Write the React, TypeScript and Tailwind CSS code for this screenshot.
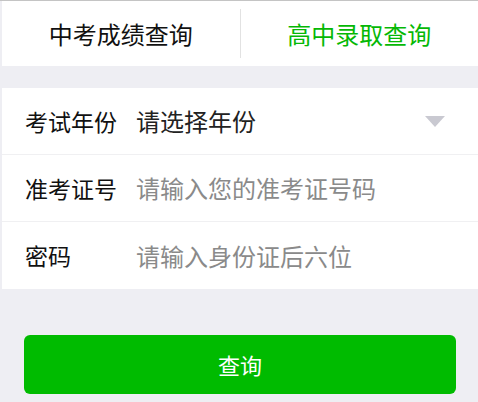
const font = "font-['Microsoft_YaHei','Noto_Sans_CJK_SC',sans-serif]";

function Row({ label, children, last }: { label: string; children: React.ReactNode; last?: boolean }) {
  return (
    <div className={`flex h-[67px] items-center pl-[23px] ${last ? "" : "border-b border-[#f0f0f2]"}`}>
      <div className="w-[111px] shrink-0 text-[23px] text-[#111]">{label}</div>
      <div className="flex flex-1 items-center">{children}</div>
    </div>
  );
}

export default function App() {
  return (
    <div className={`min-h-screen border-t border-[#c4c4c4] bg-[#eeeef3] pl-[2px] ${font}`}>
      {/* tabs */}
      <div className="flex h-[65px] items-center bg-white">
        <div className="flex h-[49px] flex-1 items-center justify-center border-r border-[#e2e2e2] text-[24px] text-[#111]">
          中考成绩查询
        </div>
        <div className="flex flex-1 items-center justify-center text-[24px] text-[#05b805]">高中录取查询</div>
      </div>

      <div className="mt-[22px] bg-white">
        <Row label="考试年份">
          <span className="flex-1 text-[24px] text-[#222]">请选择年份</span>
          <svg width="20" height="11" viewBox="0 0 20 11" className="mr-[33px]">
            <polygon points="0,0 20,0 10,11" fill="#c9c9d1" />
          </svg>
        </Row>
        <Row label="准考证号">
          <span className="text-[24px] text-[#8a8a8a]">请输入您的准考证号码</span>
        </Row>
        <Row label="密码" last>
          <span className="text-[24px] text-[#8a8a8a]">请输入身份证后六位</span>
        </Row>
      </div>

      <div className="px-[22px] pt-[46px]">
        <button className="flex h-[59px] w-full items-center justify-center rounded-[6px] bg-[#00bb00] text-[22px] text-white">
          查询
        </button>
      </div>
    </div>
  );
}
